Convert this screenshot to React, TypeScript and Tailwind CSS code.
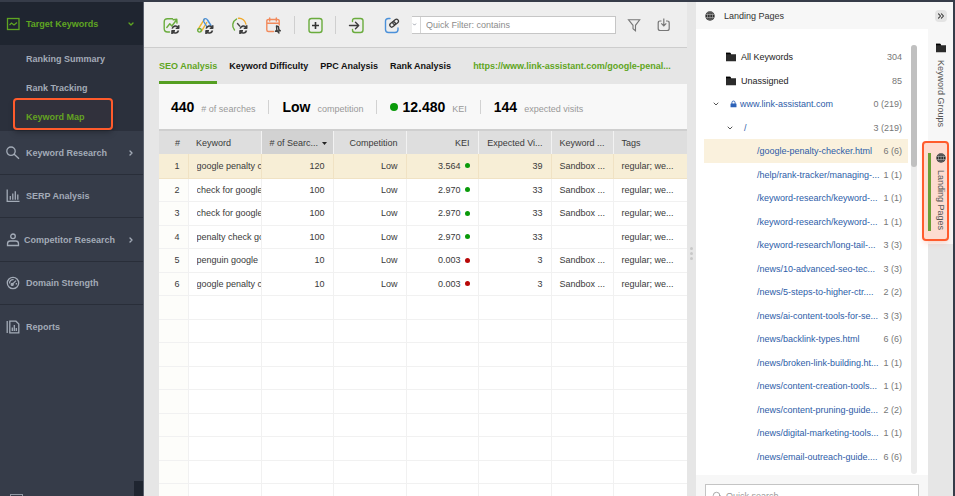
import type { ReactNode } from "react";
import clsx from "clsx";
import { ChevronDown, ChevronRight, ChevronsRight, Search } from "lucide-react";

const Refresh = () => (
  <g stroke="#3c3c3c" strokeWidth="1.6" strokeLinecap="butt" fill="none">
    <path d="M9.200 12.600a3.300 3.300 0 0 1 6-1M15.700 9.200v3h-3M15.500 14.500a3.300 3.300 0 0 1-6 1M9 17.900v-3h3" />
  </g>
);

const ToolIcon = ({ children }: { children: ReactNode }) => (
  <svg viewBox="0 0 18 18" className="w-[18px] h-[18px]" fill="none" strokeWidth="1.4" strokeLinecap="round" strokeLinejoin="round">
    {children}
  </svg>
);

const Globe = () => (
  <svg viewBox="0 0 10 10" className="w-2.5 h-2.5 shrink-0">
    <circle cx="5" cy="5" r="4.700" fill="#2e2e2e" />
    <path d="M.5 3.500h9M.5 6.500h9M5 .3v9.400M3.200.8q-1.600 4.200 0 8.400M6.800.8q1.600 4.200 0 8.400" stroke="#b5b5b5" strokeWidth=".6" fill="none" />
  </svg>
);

const Folder = () => (
  <svg viewBox="0 0 10 10" className="w-2.5 h-2.5 shrink-0">
    <path d="M0 .8h4.200l1 1.400H10v7H0z" fill="#2b2b2b" />
    <path d="M0 .8h4.200l.8 1.400H0z" fill="#000" />
  </svg>
);

const Lock = () => (
  <svg viewBox="0 0 8 8" className="w-[7px] h-2 shrink-0">
    <path d="M2.200 4V2.400a1.800 1.800 0 0 1 3.600 0V4" fill="none" stroke="#2c62b8" strokeWidth="1.100" />
    <rect x=".6" y="3.400" width="6.800" height="4.400" rx=".5" fill="#2c62b8" />
  </svg>
);

const NavIcon = ({ children }: { children: ReactNode }) => (
  <svg viewBox="0 0 14 14" className="w-3.5 h-3.5 shrink-0" fill="none" stroke="currentColor" strokeWidth="1.3">
    {children}
  </svg>
);

const navItems = [
  {
    label: "Keyword Research",
    arrow: true,
    icon: <path d="M9.200 5.200a4.200 4.200 0 1 1-8.400 0a4.200 4.200 0 0 1 8.400 0M8.200 8.200l4.800 4.600" />,
  },
  {
    label: "SERP Analysis",
    arrow: false,
    icon: <path d="M1.200.5v11.800h12.300M4.300 10.800V7M6.800 10.800V4.500M9.300 10.800V2.300M11.800 10.800V5.500" />,
  },
  {
    label: "Competitor Research",
    arrow: true,
    icon: <path d="M9.300 3.300a2.300 2.300 0 1 1-4.600 0a2.300 2.300 0 0 1 4.600 0M1.500 12.500v-1.700q0-2.800 2.800-2.800h5.400q2.800 0 2.800 2.800v1.700z" />,
  },
  {
    label: "Domain Strength",
    arrow: false,
    icon: (
      <>
        <circle cx="7" cy="7" r="5.700" />
        <path d="M3.600 7.500a3.400 3.400 0 0 1 4-3.800M6.200 8.400l3.800-3.800M10.400 7v1.500" />
        <circle cx="6.200" cy="8.400" r="1" fill="currentColor" />
      </>
    ),
  },
  {
    label: "Reports",
    arrow: false,
    icon: <path d="M1.200 1v12M3.800 1.200h6.200l2.800 2.800v8.800h-9zM6.300 11V7.500M8.300 11V5M10.300 11V8" />,
  },
];

const columns = [
  { title: "#", right: true },
  { title: "Keyword", right: false },
  { title: "# of Searc...", right: true },
  { title: "Competition", right: true },
  { title: "KEI", right: true },
  { title: "Expected Vi...", right: true },
  { title: "Keyword ...", right: false },
  { title: "Tags", right: false },
];

const rows = [
  { keyword: "google penalty c", searches: 120, kei: "3.564", good: true, visits: 39, map: "Sandbox ..." },
  { keyword: "check for google", searches: 100, kei: "2.970", good: true, visits: 33, map: "Sandbox ..." },
  { keyword: "check for google", searches: 100, kei: "2.970", good: true, visits: 33, map: "Sandbox ..." },
  { keyword: "penalty check go", searches: 100, kei: "2.970", good: true, visits: 33, map: "" },
  { keyword: "penguin google", searches: 10, kei: "0.003", good: false, visits: 3, map: "Sandbox ..." },
  { keyword: "google penalty c", searches: 10, kei: "0.003", good: false, visits: 3, map: "Sandbox ..." },
];

const emptyRows = [7, 8, 9, 10, 11, 12, 13, 14, 15];

const pages = [
  ["/google-penalty-checker.html", "6 (6)"],
  ["/help/rank-tracker/managing-...", "1 (1)"],
  ["/keyword-research/keyword-...", "1 (1)"],
  ["/keyword-research/keyword-...", "1 (1)"],
  ["/keyword-research/long-tail-...", "3 (3)"],
  ["/news/10-advanced-seo-tec...", "3 (3)"],
  ["/news/5-steps-to-higher-ctr....", "2 (2)"],
  ["/news/ai-content-tools-for-se...", "3 (3)"],
  ["/news/backlink-types.html", "6 (6)"],
  ["/news/broken-link-building.ht...", "1 (1)"],
  ["/news/content-creation-tools...", "1 (1)"],
  ["/news/content-pruning-guide...", "2 (2)"],
  ["/news/digital-marketing-tools...", "1 (1)"],
  ["/news/email-outreach-guide....", "6 (6)"],
];

const Sidebar = () => (
  <nav className="relative w-36 shrink-0 bg-[#363c49] border-r border-[#5a606c] text-[#a3abb7] font-bold overflow-hidden">
    <button className="flex items-center w-full h-[43px] pl-1.5 pr-2 bg-[#1f2530] text-[#5fa522]">
      <NavIcon>
        <rect x="1.500" y="1.500" width="11.500" height="11" />
        <path d="M3.500 8l2-2 2.500 2 3-2.500" />
      </NavIcon>
      <span className="ml-1.5">Target Keywords</span>
      <ChevronDown className="ml-auto w-2 h-2" strokeWidth={4} />
    </button>
    <ul className="grid grid-rows-3 h-[86px] bg-[#2b303c]">
      <li className="flex items-center pl-[26px]">
        <a href="#summary">Ranking Summary</a>
      </li>
      <li className="flex items-center pl-[26px]">
        <a href="#tracking">Rank Tracking</a>
      </li>
      <li className="relative flex items-center pl-[26px] text-[#5fa522]">
        <a href="#map">Keyword Map</a>
        <span className="absolute -top-1 bottom-px left-[13px] right-[30px] border-2 border-[#ff5b2c] rounded bg-[#ff5b2c]/3 shadow-md shadow-black/20" />
      </li>
    </ul>
    <ul>
      {navItems.map((item) => (
        <li key={item.label} className="odd:h-11 even:h-[43px] border-b border-[#292e39] last:border-b-0">
          <button className="flex items-center w-full h-full pl-1.5 pr-2">
            <NavIcon>{item.icon}</NavIcon>
            <span className={clsx("whitespace-nowrap", item.label === "Competitor Research" ? "ml-1" : "ml-1.5")}>
              {item.label}
            </span>
            {item.arrow && <ChevronRight className="ml-auto w-2 h-2" strokeWidth={4} />}
          </button>
        </li>
      ))}
    </ul>
    <span className="absolute right-0 bottom-0 w-[9px] h-[15px] bg-[#1f2530]" />
    <span className="absolute left-2.5 bottom-0 w-[13px] h-0.5 border-x border-t border-[#8f97a3]" />
  </nav>
);

const Toolbar = () => (
  <div className="flex items-center h-[46px] shrink-0 pl-[19px] pr-4 bg-[#eeeeee] border-b border-[#cdcdcd]">
    <div className="flex gap-4">
      <button aria-label="Check rankings">
        <ToolIcon>
          <path d="M9.500 2.700H4.500Q1.200 2.700 1.200 6v6.500q0 3.500 3.300 3.500h2M3.800 11.500l3-3.800 2 2.300 4.700-6M10.300 3.800l3.500-.5.2 3.800" stroke="#6aac3d" />
          <Refresh />
        </ToolIcon>
      </button>
      <button aria-label="Update ads data">
        <ToolIcon>
          <path d="M7.300 3.300L1.500 12.700M9.700 6.500l-5 8.300" stroke="#efb32d" />
          <path d="M6.700 5.300Q6.300 2.800 8.300 2.600 9.700 2.500 10.500 4l3.500 5.500M7 6l3 5" stroke="#4a90d9" />
          <circle cx="2.500" cy="14.300" r="1.800" stroke="#6aac3d" />
          <Refresh />
        </ToolIcon>
      </button>
      <button aria-label="Update difficulty">
        <ToolIcon>
          <path d="M5.500 3.100A7 7 0 0 0 3.500 14" stroke="#6aac3d" />
          <path d="M7.500 2.300A6.900 6.900 0 0 1 14.900 8" stroke="#f0a92c" />
          <path d="M6.500 7.500l2.200 2.500" stroke="#444" />
          <Refresh />
        </ToolIcon>
      </button>
      <button aria-label="Schedule">
        <ToolIcon>
          <path d="M8.500 15.500H3.500Q1.800 15.500 1.800 14V5q0-1.500 1.700-1.500h9Q14.200 3.500 14.200 5v4M1.800 7.300h12.400M4.700 2v3M11.300 2v3" stroke="#f28a5c" />
          <path d="M11.500 10l.3 4-1.300 1.200 4.800-.4L13.800 13.500l-.3-2.800zM12.700 15.500l1.300 1.500" stroke="#3c3c3c" />
        </ToolIcon>
      </button>
    </div>
    <span className="w-px h-[18px] mx-[11px] bg-[#cfcfcf]" />
    <button aria-label="Add keywords">
      <ToolIcon>
        <rect x="3" y="2.500" width="13" height="14" rx="2.500" stroke="#6aac3d" />
        <path d="M9.500 6v7M6 9.500h7" stroke="#333" strokeLinecap="butt" strokeWidth="1.600" />
      </ToolIcon>
    </button>
    <span className="w-px h-[18px] mx-[11px] bg-[#cfcfcf]" />
    <button aria-label="Import">
      <ToolIcon>
        <path d="M5.500 5.500V5Q5.500 2.500 8 2.500h5.500Q16 2.500 16 5v9q0 2.500-2.500 2.500H8Q5.500 16.500 5.500 14v-.5" stroke="#6aac3d" />
        <path d="M2.500 9.500h9M8.500 6.200l3.200 3.300-3.200 3.300" stroke="#3c3c3c" />
      </ToolIcon>
    </button>
    <button aria-label="Map to page" className="ml-[18px]">
      <ToolIcon>
        <path d="M7 2.500H5.500Q2.500 2.500 2.500 5.500v8q0 3 3 3h6.500q3 0 3-3V12" stroke="#4a90d9" />
        <g transform="rotate(-40 11 7)" stroke="#3c3c3c" strokeWidth="1.300">
          <rect x="6" y="5.200" width="6" height="4" rx="2" />
          <rect x="10" y="5.200" width="6" height="4" rx="2" />
        </g>
      </ToolIcon>
    </button>
    <div className="flex flex-1 min-w-0 h-[18px] ml-[11px] bg-white border-y border-r border-[#c6c6c6]">
      <button aria-label="Filter options" className="w-[9px] border-r border-[#d4d4d4] text-gray-500">
        <ChevronDown className="w-[5px] h-[5px]" strokeWidth={3} />
      </button>
      <input
        aria-label="Quick Filter"
        placeholder="Quick Filter: contains"
        className="flex-1 min-w-0 px-[5px] placeholder:text-[#8c8c8c] outline-none"
      />
    </div>
    <div className="flex gap-4 ml-[11px]">
      <button aria-label="Filter">
        <svg viewBox="0 0 14 14" className="w-3.5 h-3.5" fill="none" stroke="#777" strokeWidth="1.100">
          <path d="M1.500 1.800h11.200L8.500 7.300v5.500L6 10.800V7.300z" />
        </svg>
      </button>
      <button aria-label="Download">
        <svg viewBox="0 0 14 14" className="w-3.5 h-3.5" fill="none" stroke="#777" strokeWidth="1.200">
          <path d="M4.500 3H3Q1.200 3 1.200 5v5.500q0 2 2 2h7q2 0 2-2V5q0-2-2-2H9M6.800.5v7M4.300 5.300l2.500 2.500 2.500-2.500" />
        </svg>
      </button>
    </div>
  </div>
);

const tabs = ["SEO Analysis", "Keyword Difficulty", "PPC Analysis", "Rank Analysis"];

const Tabs = () => (
  <div className="flex h-9 shrink-0 font-bold whitespace-nowrap">
    <div className="flex gap-3">
      {tabs.map((tab, i) => (
        <button
          key={tab}
          className={clsx("pt-[3px] border-b-[3px]", i === 0 ? "border-[#559f22] text-[#5fa522]" : "border-transparent text-[#111]")}
        >
          {tab}
        </button>
      ))}
    </div>
    <a href="#page" className="self-center ml-[22px] text-[#5fa522]">
      https://www.link-assistant.com/google-penal...
    </a>
  </div>
);

const Stat = ({ value, label, dot }: { value: string; label: string; dot?: boolean }) => (
  <div className="flex items-center h-3.5 px-[13px] first:pl-0 border-l border-[#d2d2d2] first:border-l-0">
    {dot && <span className="w-2 h-2 mr-1 rounded-full bg-[#0a9a0a]" />}
    <p className="flex items-baseline gap-[7px] whitespace-nowrap">
      <strong className="text-[14px] leading-4 text-black">{value}</strong>
      <span className="text-[#999]">{label}</span>
    </p>
  </div>
);

const KeywordTable = () => (
  <table className="w-full table-fixed border-collapse text-[#3a3a3a] whitespace-nowrap">
    <colgroup>
      <col className="w-[29px]" />
      <col className="w-[73px]" />
      <col className="w-[72px]" />
      <col className="w-[73px]" />
      <col className="w-[72px]" />
      <col className="w-[73px]" />
      <col className="w-[62px]" />
      <col />
    </colgroup>
    <thead>
      <tr className="h-[23px] bg-[#dedede]">
        {columns.map((col, i) => (
          <th
            key={i}
            className={clsx(
              "px-2 font-normal",
              col.right ? "text-right" : "text-left",
              i > 0 && "border-r border-[#f2f2f2] last:border-r-0",
              i === 2 && "bg-[#d2d2d2]"
            )}
          >
            {col.title}
            {i === 2 && (
              <svg viewBox="0 0 5 3" className="inline-block w-[5px] h-[3px] ml-1 align-middle">
                <path d="M0 0h5L2.500 3z" fill="#222" />
              </svg>
            )}
          </th>
        ))}
      </tr>
    </thead>
    <tbody>
      {rows.map((row, i) => (
        <tr
          key={i}
          className={clsx(
            "odd:h-6 even:h-[23px] *:px-2 *:border-r *:border-b *:last:border-r-0",
            i === 0 ? "bg-[#f7eed6] *:border-[#f0e2c4]" : "*:border-[#f1f1f1] *:first:bg-[#fdfdfa]"
          )}
        >
          <td className="text-right">{i + 1}</td>
          <td>
            <div className="overflow-hidden -mr-2">{row.keyword}</div>
          </td>
          <td className="text-right">{row.searches}</td>
          <td className="text-right">Low</td>
          <td>
            <div className="flex items-center justify-end gap-1">
              {row.kei}
              <span className={clsx("w-[5px] h-[5px] rounded-full", row.good ? "bg-[#0a9a0a]" : "bg-[#b80808]")} />
            </div>
          </td>
          <td className="text-right">{row.visits}</td>
          <td>{row.map}</td>
          <td>regular; we...</td>
        </tr>
      ))}
      {emptyRows.map((n) => (
        <tr key={n} className="odd:h-6 even:h-[23px] *:border-r *:border-b *:border-[#f1f1f1] *:first:bg-[#fdfdfa] *:last:border-r-0">
          {columns.map((_, i) => (
            <td key={i} />
          ))}
        </tr>
      ))}
    </tbody>
  </table>
);

const PagesTree = () => (
  <div className="flex flex-1 min-h-0 pl-2 pr-[11px] bg-white">
    <ul className="flex-1 min-w-0 pt-4 text-[#2d5ca8] whitespace-nowrap *:flex *:items-center *:pr-1.5 *:odd:h-6 *:even:h-[23px]">
      <li className="pl-[22px] text-[#222]">
        <Folder />
        <span className="ml-[5px]">All Keywords</span>
        <span className="ml-auto text-[#777]">304</span>
      </li>
      <li className="pl-[22px] text-[#222]">
        <Folder />
        <span className="ml-[5px]">Unassigned</span>
        <span className="ml-auto text-[#777]">85</span>
      </li>
      <li className="pl-2">
        <ChevronDown className="w-2 h-2 text-[#555]" strokeWidth={3} />
        <span className="ml-2.5">
          <Lock />
        </span>
        <a href="#root" className="ml-[3px]">www.link-assistant.com</a>
        <span className="ml-auto text-[#777]">0 (219)</span>
      </li>
      <li className="pl-[22px]">
        <ChevronDown className="w-2 h-2 text-[#555]" strokeWidth={3} />
        <a href="#home" className="ml-2.5">/</a>
        <span className="ml-auto text-[#777]">3 (219)</span>
      </li>
      {pages.map(([path, count], i) => (
        <li key={i} className={clsx("pl-[53px]", i === 0 && "bg-[#faf1dd]")}>
          <a href="#page">{path}</a>
          <span className="ml-auto text-[#777]">{count}</span>
        </li>
      ))}
    </ul>
    <div className="w-1.5 mt-4 mb-px ml-[3px] rounded-full bg-[#ececec]">
      <div className="h-[122px] rounded-full bg-[#c0c0c0]" />
    </div>
  </div>
);

const SidePanel = () => (
  <aside className="flex flex-col w-[257px] shrink-0 bg-[#f7f7f7]">
    <header className="flex items-center h-[27px] shrink-0 pl-[9px] pr-1.5 text-[#333]">
      <Globe />
      <h2 className="ml-[9px]">Landing Pages</h2>
      <button aria-label="Collapse panel" className="ml-auto p-px rounded bg-[#e4e4e4]">
        <ChevronsRight className="w-2.5 h-2.5" strokeWidth={2.5} />
      </button>
    </header>
    <div className="flex flex-1 min-h-0">
      <div className="flex flex-col flex-1 min-w-0">
        <PagesTree />
        <div className="h-[21px] shrink-0 px-[9px] pt-[9px] overflow-hidden">
          <label className="flex items-center h-6 pl-1.5 bg-white border border-[#c4c4c4]">
            <Search className="w-2.5 h-2.5 text-[#999]" />
            <input
              aria-label="Quick search"
              placeholder="Quick search"
              className="flex-1 min-w-0 ml-1 placeholder:text-[#999] outline-none"
            />
          </label>
        </div>
      </div>
      {/* vertical tabs */}
      <div className="flex flex-col w-[25px] shrink-0 text-[#555]">
        <button className="flex flex-col items-center gap-[7px] h-28 pt-3.5">
          <Folder />
          <span className="[writing-mode:vertical-rl]">Keyword Groups</span>
        </button>
        <button className="relative flex flex-col items-center h-[103px] pt-3">
          <span className="absolute top-0 bottom-[3px] -left-1.5 right-1 border-2 border-[#ff5b2c] rounded bg-[#fddcd0] shadow-md shadow-[#ff5b2c]/15" />
          <span className="absolute top-3 left-0 w-[3px] h-[78px] bg-[#6a9e35]" />
          <span className="relative flex flex-col items-center gap-[7px]">
            <Globe />
            <span className="[writing-mode:vertical-rl]">Landing Pages</span>
          </span>
        </button>
        <div className="flex-1 bg-[#e6e6e6]" />
      </div>
    </div>
  </aside>
);

export default function App() {
  return (
    <div className="flex h-screen overflow-hidden border-t-2 border-r-2 border-[#363c49] bg-[#e6e6e6] font-['Liberation_Sans',Arial,sans-serif] text-[9px] leading-3">
      <Sidebar />
      <main className="flex flex-col flex-1 min-w-0">
        <Toolbar />
        <div className="flex flex-col flex-1 min-h-0 pl-[15px]">
          <Tabs />
          <div className="flex items-center h-[47px] shrink-0 pl-3 bg-[#f8f8f8] border-b-2 border-[#cfcfcf]">
            <Stat value="440" label="# of searches" />
            <Stat value="Low" label="competition" />
            <Stat value="12.480" label="KEI" dot />
            <Stat value="144" label="expected visits" />
          </div>
          <div className="flex-1 min-h-0 overflow-hidden bg-white">
            <KeywordTable />
          </div>
        </div>
      </main>
      {/* splitter */}
      <div className="flex flex-col items-center justify-center gap-0.5 w-[9px] shrink-0 pt-2">
        <span className="w-[3px] h-[3px] rounded-full bg-[#c8c8c8]" />
        <span className="w-[3px] h-[3px] rounded-full bg-[#c8c8c8]" />
        <span className="w-[3px] h-[3px] rounded-full bg-[#c8c8c8]" />
      </div>
      <SidePanel />
    </div>
  );
}
